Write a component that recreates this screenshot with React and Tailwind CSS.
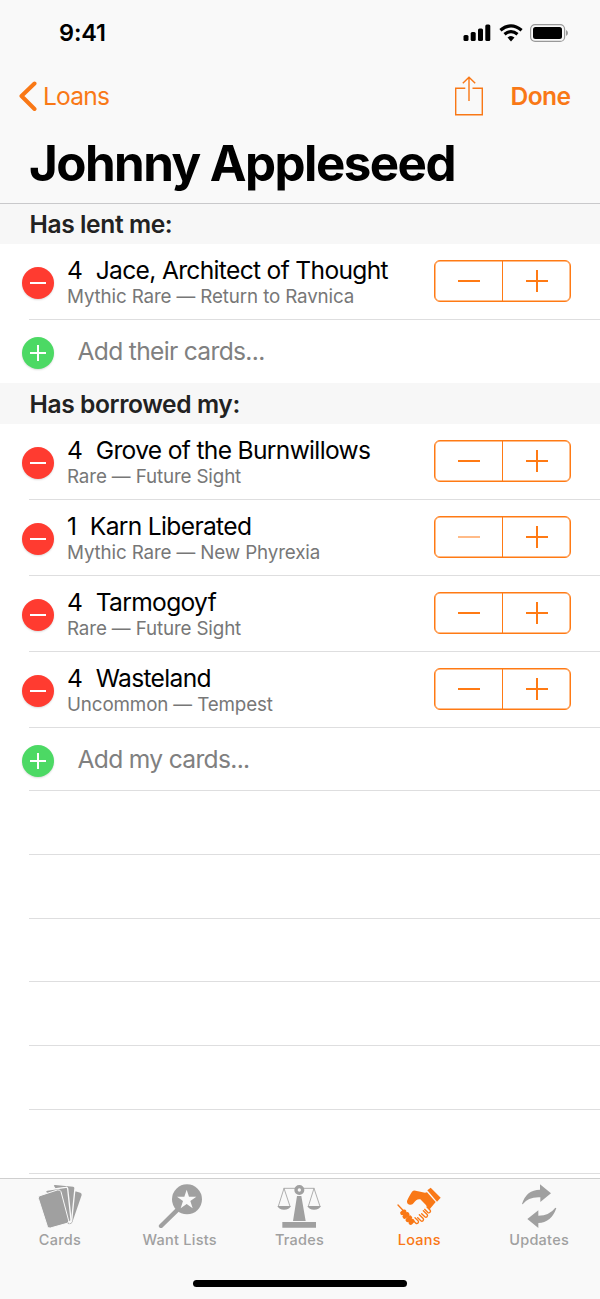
import { Fragment, useState } from 'react'

const SECTIONS = [
  {
    title: 'Has lent me:',
    add: 'Add their cards...',
    cards: [
      { qty: 4, name: 'Jace, Architect of Thought', rarity: 'Mythic Rare', set: 'Return to Ravnica' },
    ],
  },
  {
    title: 'Has borrowed my:',
    add: 'Add my cards...',
    cards: [
      { qty: 4, name: 'Grove of the Burnwillows', rarity: 'Rare', set: 'Future Sight' },
      { qty: 1, name: 'Karn Liberated', rarity: 'Mythic Rare', set: 'New Phyrexia' },
      { qty: 4, name: 'Tarmogoyf', rarity: 'Rare', set: 'Future Sight' },
      { qty: 4, name: 'Wasteland', rarity: 'Uncommon', set: 'Tempest' },
    ],
  },
]

const TABS = [
  { label: 'Cards', Icon: CardsIcon },
  { label: 'Want Lists', Icon: WantIcon },
  { label: 'Trades', Icon: ScalesIcon },
  { label: 'Loans', Icon: HandshakeIcon },
  { label: 'Updates', Icon: UpdatesIcon },
]

function CardsIcon() {
  return (
    <svg className="w-11 h-11" viewBox="0 0 132 132" fill="currentColor" strokeLinejoin="round">
      <path d="M112 22L127 26Q132 28 131 33L103 115Q100 121 93 121L88 118Z" />
      <path d="M45 5Q47 0 52 1L106 6Q111 7 111 12L101 110Q100 116 94 117L80 60Z" stroke="#f9f9f9" strokeWidth="4" />
      <path d="M22 24Q23 19 28 18L83 10Q88 9 89 14L99 107Q99 113 94 114L60 60Z" stroke="#f9f9f9" strokeWidth="4" />
      <path d="M6 35L58 18Q66 16 69 23L92 110Q93 116 87 118L37 132Q30 133 28 127L1 43Q0 37 6 35Z" stroke="#f9f9f9" strokeWidth="3" />
    </svg>
  )
}

function WantIcon() {
  return (
    <svg className="w-11 h-11" viewBox="0 0 132 132" fill="currentColor">
      <path d="M56 80L9 126" stroke="currentColor" strokeWidth="13" strokeLinecap="round" />
      <circle cx="87" cy="46" r="45" />
      <path fill="#f9f9f9" d="M86 17L93 38L115 38L97 51L104 73L86 60L68 73L75 51L57 38L79 38Z" />
    </svg>
  )
}

function ScalesIcon() {
  return (
    <svg className="w-11 h-11" viewBox="0 0 132 132" fill="currentColor">
      <path d="M16 114H117V131H16ZM60 36H73L86 111H48Z" />
      <path d="M1 66H42Q37 77 21 77Q6 77 1 66ZM91 66H132Q127 77 111 77Q96 77 91 66Z" />
      <path d="M20 13H112M21 13L4 67M21 13L39 67M111 13L94 67M111 13L129 67" stroke="currentColor" strokeWidth="2.5" />
      <circle cx="67" cy="18" r="10" fill="#f9f9f9" stroke="currentColor" strokeWidth="10" />
    </svg>
  )
}

function HandshakeIcon() {
  return (
    <svg className="w-11 h-11" viewBox="0 0 132 132" fill="none" stroke="currentColor" strokeLinecap="round">
      <g fill="currentColor" stroke="none">
        <path d="M91 19L101 11L131 41L120 53Z" />
        <path d="M45 23Q50 18 56 20L84 26L90 25L116 54L98 76Q92 72 86 62L70 46Q59 43 50 57Q46 64 38 62Q29 60 30 51Q33 42 45 23Z" />
      </g>
      <path d="M3 63L22 83" strokeWidth="4" />
      <path d="M16 87L22 83M23 98L31 91M32 108L39 101M41 116L46 111" strokeWidth="13" />
      <g strokeWidth="4">
        <path d="M54 101L63.5 110.5A5 5 0 0 1 56.5 117.5L48 109" />
        <path d="M67 92L78.5 103.5A5 5 0 0 1 71.5 110.5L62 101" />
        <path d="M79 80L90.5 91.5A5 5 0 0 1 83.5 98.5L74 89" />
        <path d="M90 69L99.5 78.5A5 5 0 0 1 92.5 85.5L83 76" />
      </g>
    </svg>
  )
}

function UpdatesIcon() {
  return (
    <svg className="w-11 h-11" viewBox="0 0 132 132" fill="currentColor">
      <path d="M69 1L102 28L70 54V40Q34 38 17 61L15 60Q28 17 69 17Z" />
      <path d="M64 132L31 105L64 79V95Q98 94 115 71L118 73Q102 117 64 117Z" />
    </svg>
  )
}

function StatusBar() {
  return (
    <div className="flex h-[66px] items-center justify-between pl-[59px] pr-8">
      <span className="text-[23.5px] font-semibold leading-none tracking-[-0.15px]">9:41</span>
      <div className="flex items-center gap-[7.5px]">
        <svg className="h-[18px] w-7" viewBox="0 0 28 18">
          <rect x="0.5" y="11" width="5" height="6" rx="1.5" />
          <rect x="7.7" y="8" width="5" height="9" rx="1.5" />
          <rect x="15" y="4.5" width="5" height="12.5" rx="1.5" />
          <rect x="22.3" y="0.5" width="5" height="16.5" rx="1.5" />
        </svg>
        <svg className="h-[18px] w-6" viewBox="0 0 24 18" fill="none" stroke="black" strokeWidth="3.2">
          <path d="M1.4 6.2Q12 -2.4 22.6 6.2" />
          <path d="M5.5 10.2Q12 4.9 18.5 10.2" />
          <path d="M8.5 13.6Q12 10.6 15.5 13.6L12 17.4Z" fill="black" stroke="none" />
        </svg>
        <svg className="h-[18px] w-[38px]" viewBox="0 0 38 18">
          <rect x="0.6" y="0.6" width="34" height="16.8" rx="4.5" fill="none" stroke="#999" strokeWidth="1.2" />
          <rect x="3" y="3" width="29" height="12" rx="2.5" />
          <path d="M36 6Q38 7 38 9Q38 11 36 12Z" fill="#999" />
        </svg>
      </div>
    </div>
  )
}

function NavBar({ title }) {
  return (
    <header className="h-[204px] shrink-0 border-b border-[#c9c9cb] bg-[#f9f9f9]">
      <StatusBar />
      <div className="flex h-[60px] items-center justify-between pl-[19px] pr-[29.5px] text-[#f97816]">
        <button className="flex items-center gap-1.5">
          <svg className="h-[30px] w-[18px]" viewBox="0 0 18 30" fill="none" stroke="currentColor" strokeWidth="4" strokeLinecap="round" strokeLinejoin="round">
            <path d="M15.5 2.5L2.5 15L15.5 28" />
          </svg>
          <span className="text-[24.6px] leading-none tracking-[-0.8px]">Loans</span>
        </button>
        <div className="flex items-center gap-7">
          <svg className="h-10 w-7" viewBox="0 0 28 40" fill="none" stroke="currentColor" strokeWidth="1.4">
            <path d="M10.3 12.2H0.7V38.8H27.3V12.2H17.5" />
            <path d="M14 25V1.2M7.8 7.3L14 1.2L20.2 7.3" />
          </svg>
          <button className="text-[24.6px] font-semibold leading-none tracking-[-0.6px]">Done</button>
        </div>
      </div>
      <h1 className="pl-[29px] text-[49.3px] font-bold leading-[74px] tracking-[-1.55px]">{title}</h1>
    </header>
  )
}

function Badge({ add }) {
  return (
    <span className={`mt-px h-8 w-8 shrink-0 rounded-full shadow-[0_1px_2px_rgba(0,0,0,0.15)] ${add ? 'bg-[#4cd964]' : 'bg-[#ff3b30]'}`}>
      <svg viewBox="0 0 32 32" stroke="white" strokeWidth="2">
        <path d={add ? 'M8 16H24M16 8V24' : 'M8 16H24'} />
      </svg>
    </span>
  )
}

function Stepper({ qty, onChange }) {
  return (
    <div className="mb-0.5 mr-[29px] flex h-[42px] w-[137px] shrink-0 rounded-[6px] border border-[#ff7a14] text-[#ff7a14] shadow-[inset_0_0_0_0.5px_#ff7a14]">
      <button
        disabled={qty <= 1}
        onClick={() => onChange(qty - 1)}
        className="flex flex-1 items-center justify-center border-r border-[#ff7a14]"
      >
        <svg className={`h-6 w-6 ${qty <= 1 ? 'opacity-50' : ''}`} viewBox="0 0 24 24" stroke="currentColor" strokeWidth="2">
          <path d="M1 12H23" />
        </svg>
      </button>
      <button onClick={() => onChange(qty + 1)} className="flex flex-1 items-center justify-center">
        <svg className="h-6 w-6" viewBox="0 0 24 24" stroke="currentColor" strokeWidth="2">
          <path d="M1 12H23M12 1V23" />
        </svg>
      </button>
    </div>
  )
}

function CardRow({ card }) {
  const [qty, setQty] = useState(card.qty)

  return (
    <div className="flex h-[76px] pl-[22px]">
      <div className="flex items-center">
        <Badge />
      </div>
      <div className="relative ml-[13px] flex flex-1 items-center justify-between">
        <div>
          <p className="flex gap-[13.5px] text-[24.6px] leading-[28px] tracking-[-0.68px]">
            <span>{qty}</span>
            <span>{card.name}</span>
          </p>
          <p className="pt-0.5 text-[18.8px] leading-[22px] tracking-[-0.14px] text-[#777]">{card.rarity} — {card.set}</p>
        </div>
        <Stepper qty={qty} onChange={setQty} />
        <div className="absolute bottom-0 -left-[38px] right-0 h-px bg-[#dededf]" />
      </div>
    </div>
  )
}

function AddRow({ label }) {
  return (
    <div className="flex h-[63px] items-center pl-[22px] pt-0.5">
      <Badge add />
      <span className="ml-[23.5px] pb-0.5 text-[24.6px] leading-none tracking-[-0.68px] text-[#808080]">{label}</span>
    </div>
  )
}

export default function App() {
  return (
    <div className="flex h-[1299px] w-[600px] flex-col overflow-hidden bg-white font-['Inter',sans-serif] text-black">
      <NavBar title="Johnny Appleseed" />

      <main className="min-h-0 flex-1 overflow-hidden">
        {SECTIONS.map((section, i) => (
          <Fragment key={section.title}>
            <h2 className={`bg-[#f7f7f7] pl-[29.5px] text-[24.6px] font-semibold tracking-[-0.4px] text-[#222] ${i === 0 ? 'h-10 leading-[41px]' : 'h-[41px] leading-[43px]'}`}>
              {section.title}
            </h2>
            {section.cards.map((card) => (
              <CardRow key={card.name} card={card} />
            ))}
            <AddRow label={section.add} />
          </Fragment>
        ))}
        {/* Empty rows down to the tab bar */}
        <div className="ml-[29px] -mt-px h-px bg-[#dededf]" />
        {[0, 1, 2, 3, 4, 5].map((n) => (
          <div key={n} className="ml-[29px] h-[63.8px] border-b border-[#dededf]" />
        ))}
      </main>

      <footer className="flex h-[121px] shrink-0 flex-col items-center border-t border-[#cfcfcf] bg-[#f9f9f9]">
        <nav className="grid w-[599px] grid-cols-5 self-start pt-[5px]">
          {TABS.map(({ label, Icon }) => (
            <button
              key={label}
              className={`flex flex-col items-center ${label === 'Loans' ? 'text-[#f97816]' : 'text-[#a0a0a0]'}`}
            >
              <Icon />
              <span className="mt-0.5 text-[14.5px] font-medium leading-5 tracking-[0.25px]">{label}</span>
            </button>
          ))}
        </nav>
        <div className="mt-[30px] h-[7px] w-[214px] rounded-full bg-black" />
      </footer>
    </div>
  )
}
